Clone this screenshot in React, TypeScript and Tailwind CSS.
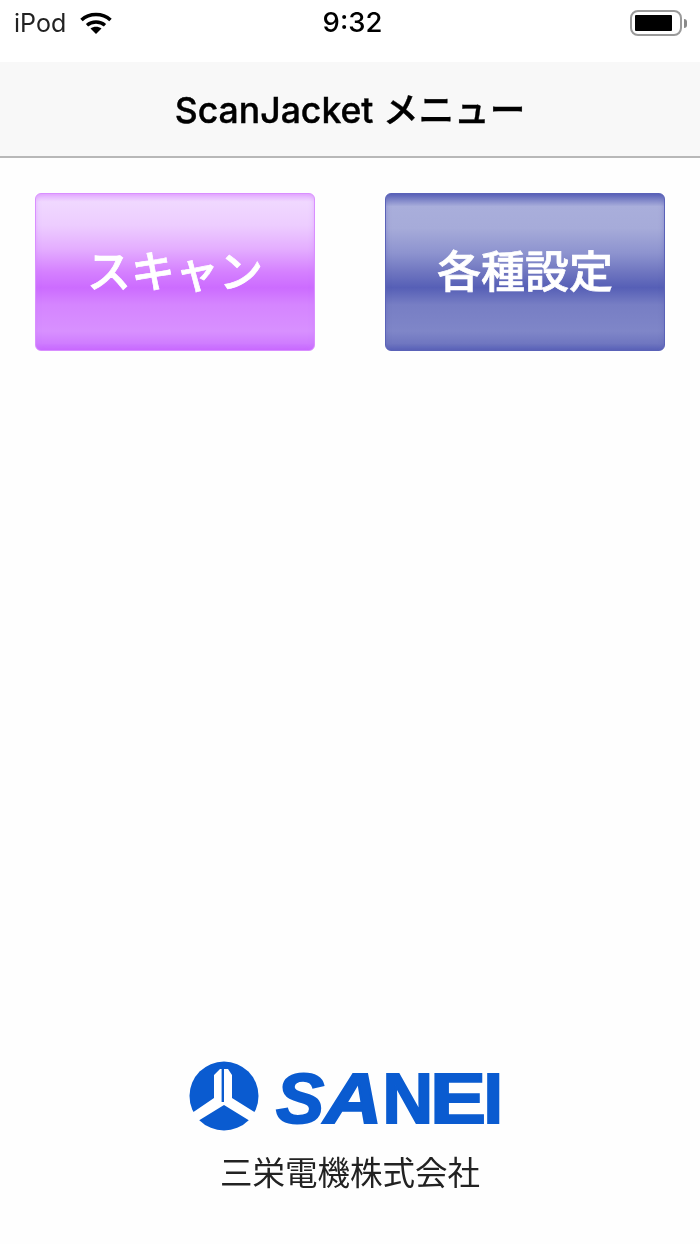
const sans = "font-['Inter','Noto_Sans_CJK_JP',sans-serif]";

const Wifi = () => (
  <svg viewBox="0 0 32 22" className="w-[32px] h-[22px] ml-[14px]" fill="none" stroke="#000">
    <path d="M1.5 8 C9.5 0.7 22.5 0.7 30.5 8" strokeWidth="3.6" />
    <path d="M7 13.2 C12 8.9 20 8.9 25 13.2" strokeWidth="3.4" />
    <path d="M16 22 L10.5 16.6 C13.5 14.2 18.5 14.2 21.5 16.6 Z" fill="#000" stroke="none" />
  </svg>
);

const Battery = () => (
  <div className="flex items-center">
    <div className="w-[52px] h-[26px] rounded-[8px] border-2 border-[#9a9a9a] p-[3px]">
      <div className="w-[37px] h-full bg-black rounded-[1px]" />
    </div>
    <div className="w-[3px] h-[9px] ml-[2px] bg-[#8a8a8a] rounded-r-[3px]" />
  </div>
);

const Emblem = () => (
  <svg viewBox="5 6 70 70" className="w-[70px] h-[70px]">
    <circle cx="40" cy="41" r="34.5" fill="#0a5bd0" />
    <path d="M30 20 L36 14 L44 14 L48 20 L48 43 L72 58 L66 66 L40 50 L14 66 L8 58 L30 43 Z" fill="#fff" />
    <path d="M37.6 12 H40 V47 H37.6 Z" fill="#0a5bd0" />
  </svg>
);

const Logo = () => (
  <div className="flex items-center pr-[8px]">
    <Emblem />
    <div className="ml-[17px] h-[52px] mt-[6px] flex items-center font-['Liberation_Sans',sans-serif] font-bold text-[70px] leading-none text-[#0a5bd0] [-webkit-text-stroke:2px_#0a5bd0]">
      <span className="italic inline-block origin-left scale-x-[1.03] w-[48px]">S</span>
      <span className="italic inline-block origin-left scale-x-[1.15] w-[59px]">A</span>
      <span className="inline-block w-[47px]">N</span>
      <span className="inline-block origin-left scale-x-[1.2] w-[54px]">E</span>
      <span className="inline-block w-[20px]">I</span>
    </div>
  </div>
);

export default function App() {
  return (
    <div className={`${sans} w-[700px] h-[1244px] flex flex-col bg-[#fefefe] text-black overflow-hidden blur-[0.5px]`}>
      <div className="h-[62px] relative flex items-center justify-between pl-[14px] pr-[13px] bg-white pb-[16px]">
        <div className="flex items-center">
          <span className="text-[25px] leading-none text-[#222]">iPod</span>
          <Wifi />
        </div>
        <span className="absolute left-[5px] right-0 text-center text-[27.5px] leading-none font-medium">9:32</span>
        <Battery />
      </div>

      <div className="h-[96px] flex items-center justify-center bg-[#f8f8f8] border-b-2 border-[#b8b8b8] pt-[3px]">
        <span className="text-[35.6px] font-medium leading-none [-webkit-text-stroke:0.4px_black]">ScanJacket メニュー</span>
      </div>

      <div className="flex justify-between px-[35px] pt-[35px]">
        <button className="w-[280px] h-[158px] rounded-[6px] border border-[#d98fff] text-white text-[44px] font-medium [-webkit-text-stroke:0.7px_white] shadow-[inset_0_0_5px_#cf7aff66] bg-[linear-gradient(to_bottom,#e6b0ff_0%,#f0d8ff_5%,#edcdff_20%,#e4aeff_35%,#d580ff_50%,#cc6cff_60%,#d585ff_71%,#d890ff_88%,#cf7cff_96%,#c766ff_100%)]">
          スキャン
        </button>
        <button className="w-[280px] h-[158px] rounded-[6px] border border-[#5a62b8] text-white text-[44px] font-medium [-webkit-text-stroke:0.7px_white] shadow-[inset_0_0_5px_#5a62b866] bg-[linear-gradient(to_bottom,#5a62b8_0%,#a9aedb_8%,#a6abd9_22%,#8d93cf_38%,#6f76c0_50%,#565fb6_60%,#777ec4_71%,#7f86c8_88%,#6f76c0_96%,#5a62b8_100%)]">
          各種設定
        </button>
      </div>

      <div className="mt-auto pb-[52px] flex flex-col items-center">
        <Logo />
        <div className="mt-[25px] text-[32.5px] leading-[36px] text-[#222]">三栄電機株式会社</div>
      </div>
    </div>
  );
}
